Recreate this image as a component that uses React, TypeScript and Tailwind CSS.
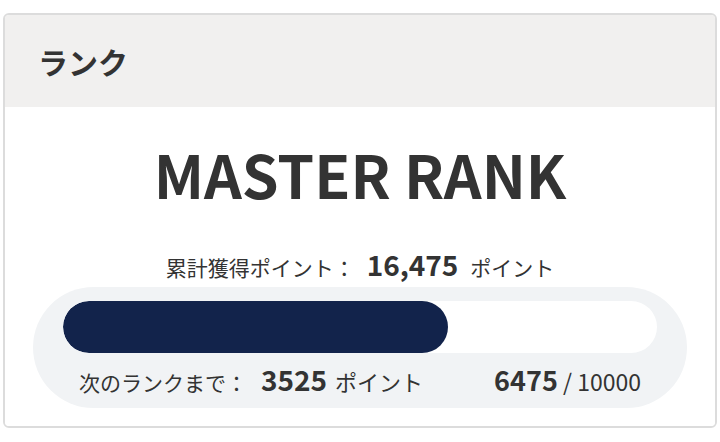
export default function App() {
  const current = 6475;
  const goal = 10000;
  const pct = (current / goal) * 100;

  return (
    <div
      className="h-[442px] w-[720px] bg-white px-[3px] pt-[13px] text-[#333]"
      style={{ fontFamily: '"Noto Sans CJK JP", "Noto Sans", sans-serif' }}
    >
      <div className="overflow-hidden rounded-md border-2 border-[#dcdcdc]">
        <header className="flex h-[92px] items-center bg-[#f1f0ef] px-[33px]">
          <h2 className="text-[30px] font-bold leading-[40px]">ランク</h2>
        </header>

        <section className="flex flex-col items-center bg-white pb-[18px]">
          <p className="mt-[27px] text-[59px] font-bold leading-[80px]">MASTER RANK</p>

          <p className="mt-[35px] flex items-baseline gap-[12px] text-[21px] leading-[30px]">
            <span>累計獲得ポイント：</span>
            <span className="text-[28px] font-bold">16,475</span>
            <span>ポイント</span>
          </p>

          <div className="mt-[5px] w-[654px] rounded-full bg-[#f1f3f5] px-[30px] pt-[14px] pb-[10px]">
            <div className="h-[52px] w-full overflow-hidden rounded-full bg-white">
              <div className="h-full rounded-full bg-[#12234b]" style={{ width: `${pct}%` }} />
            </div>
            <div className="mt-[10px] flex items-baseline justify-between px-[16px] leading-[32px]">
              <p className="flex items-baseline text-[21px]">
                <span>次のランクまで：</span>
                <span className="ml-[14px] text-[28px] font-bold">3525</span>
                <span className="ml-[8px] text-[22px]">ポイント</span>
              </p>
              <p className="text-[23px]">
                <span className="text-[27px] font-bold">6475</span> / 10000
              </p>
            </div>
          </div>
        </section>
      </div>
    </div>
  );
}
